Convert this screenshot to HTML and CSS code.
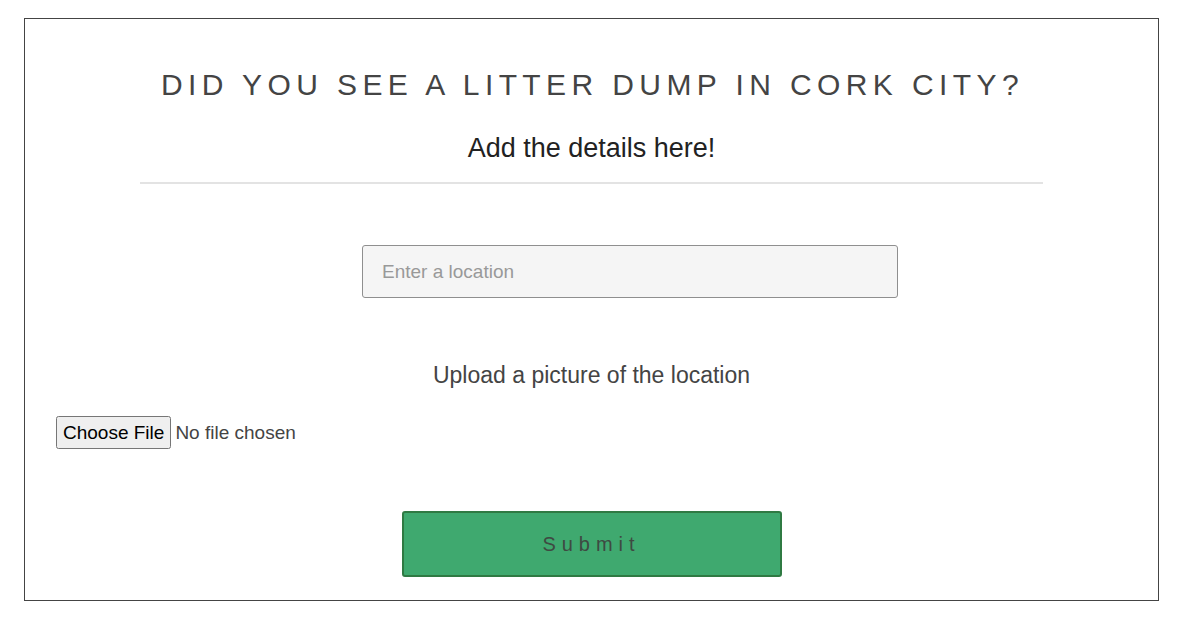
FILE: index.html
```html
<!DOCTYPE html>
<html>
<head>
<meta charset="utf-8">
<link rel="stylesheet" href="styles.css">
</head>
<body>
<div class="card">
  <h1 class="title">Did you see a litter dump in Cork City?</h1>
  <h2 class="subtitle">Add the details here!</h2>
  <hr class="rule">
  <form class="form">
    <div class="loc-row">
      <input class="loc" type="text" placeholder="Enter a location">
    </div>
    <p class="upload-label">Upload a picture of the location</p>
    <div class="file-row">
      <input class="file" type="file">
    </div>
    <div class="submit-row">
      <button class="submit" type="button">Submit</button>
    </div>
  </form>
</div>
</body>
</html>
```
FILE: styles.css
```css
html, body {
  margin: 0;
  padding: 0;
  background: #fff;
}
body {
  font-family: "Liberation Sans", Arial, sans-serif;
  color: #444;
}
.card {
  box-sizing: border-box;
  margin: 18px 0 0 24px;
  width: 1135px;
  height: 583px;
  border: 1px solid #444;
  padding-top: 1px;
}
.title {
  margin: 48px 0 0 0;
  text-align: center;
  text-transform: uppercase;
  font-weight: normal;
  font-size: 30px;
  letter-spacing: 5.4px;
  line-height: 34px;
  color: #444;
  padding-left: 2px;
}
.subtitle {
  margin: 31px 0 0 0;
  text-align: center;
  font-weight: normal;
  font-size: 27px;
  line-height: 30px;
  color: #222;
}
.rule {
  width: 903px;
  margin: 19px auto 0;
  border: 0;
  border-top: 2px solid #e3e3e3;
  height: 0;
}
.form {
  margin: 0;
}
.loc-row {
  display: flex;
  margin-top: 61px;
  padding-left: 337px;
}
.loc {
  box-sizing: border-box;
  width: 536px;
  height: 53px;
  background: #f5f5f5;
  border: 1px solid #8f8f8f;
  border-radius: 3px;
  padding: 0 19px;
  font-family: "Liberation Sans", Arial, sans-serif;
  font-size: 19px;
  color: #444;
  outline: none;
}
.loc::placeholder {
  color: #999;
}
.upload-label {
  margin: 64px 0 0 0;
  text-align: center;
  font-size: 23px;
  line-height: 26px;
  color: #444;
}
.file-row {
  display: flex;
  margin-top: 28px;
  padding-left: 31px;
}
.file {
  font-family: "Liberation Sans", Arial, sans-serif;
  font-size: 19px;
  color: #444;
}
.file::file-selector-button {
  font-family: "Liberation Sans", Arial, sans-serif;
  font-size: 19px;
  padding: 4px 5px 3px;
  margin-right: 4px;
}
.submit-row {
  display: flex;
  justify-content: center;
  margin-top: 62px;
}
.submit {
  box-sizing: border-box;
  width: 380px;
  height: 66px;
  background: #3fa96f;
  border: 2px solid #2f7a43;
  border-radius: 3px;
  font-family: "Liberation Sans", Arial, sans-serif;
  font-size: 20px;
  letter-spacing: 6px;
  color: #3e4a42;
  padding: 0;
}
```
